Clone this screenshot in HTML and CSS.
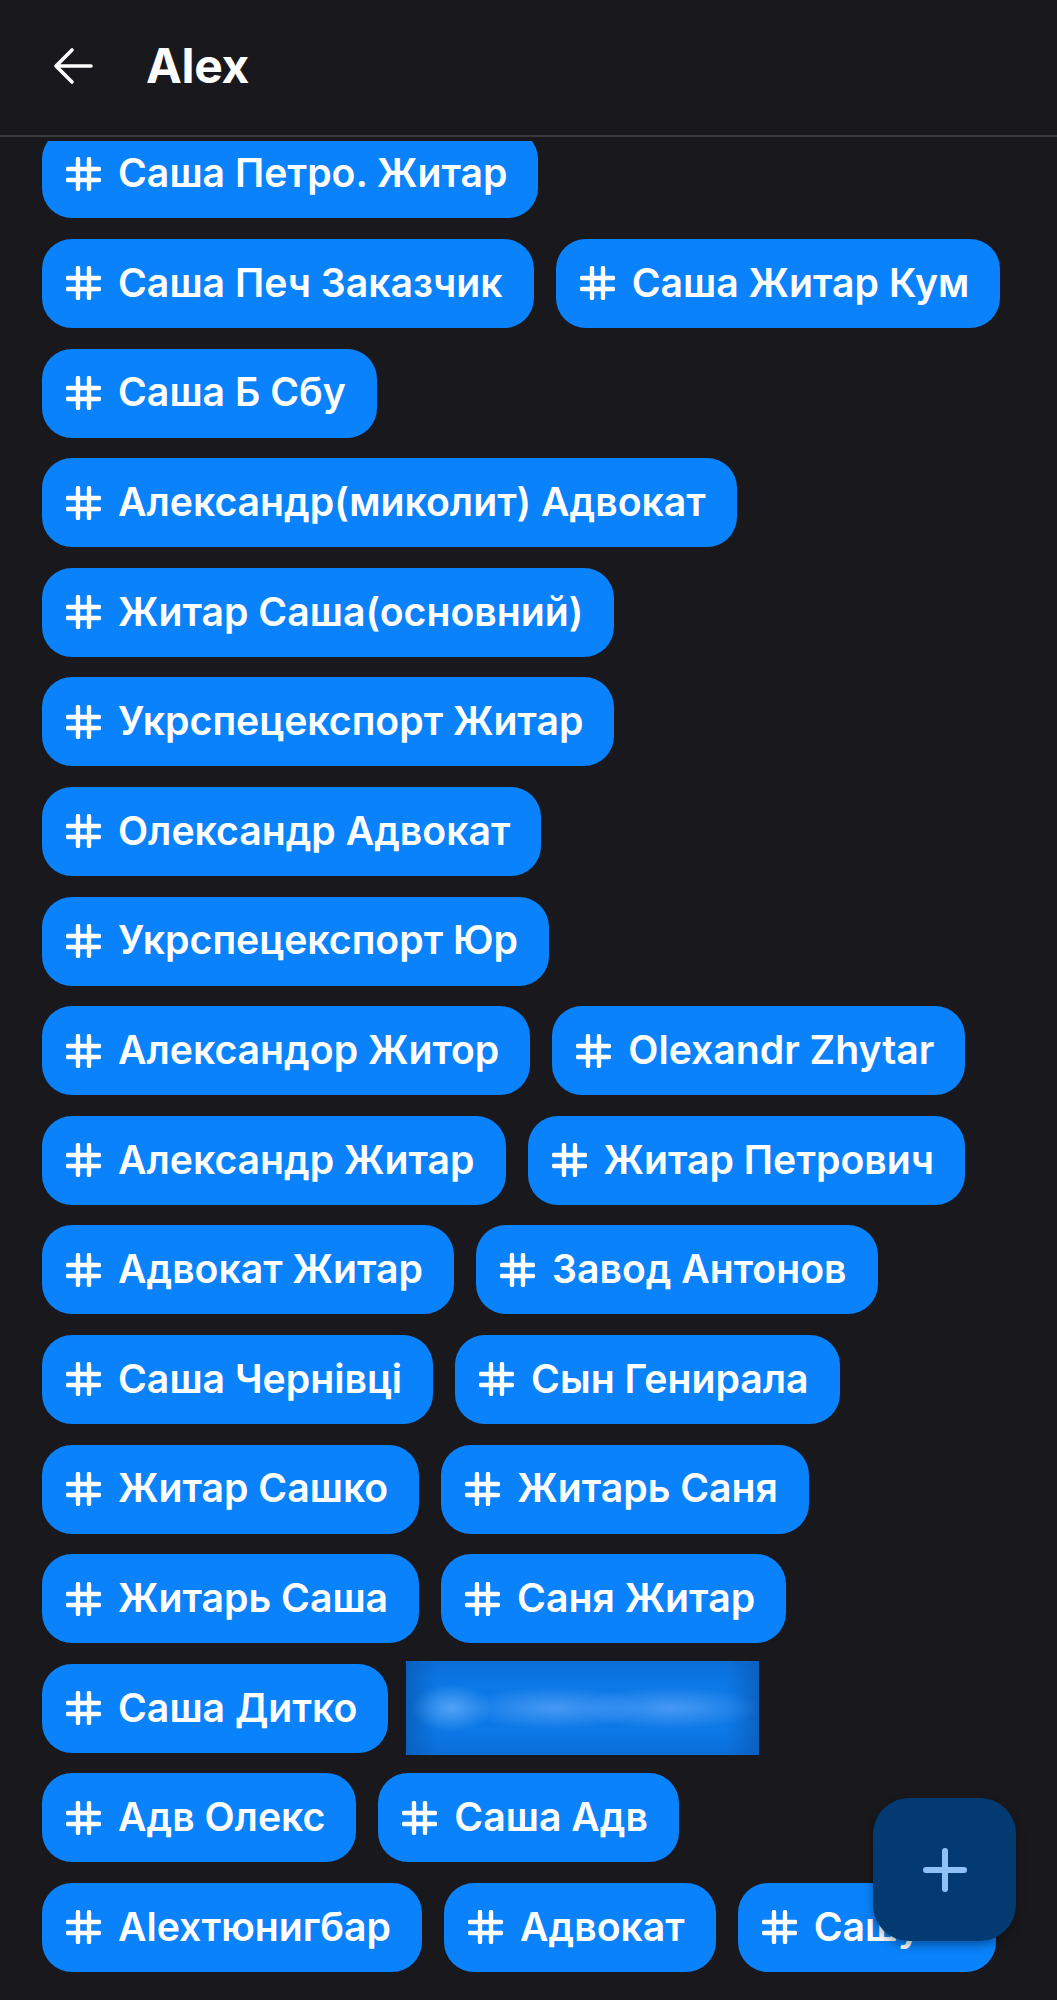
FILE: index.html
```html
<!DOCTYPE html>
<html>
<head>
    <title>Alex</title>
    <link rel="stylesheet" href="styles.css">
</head>
<body>
    <div class="topbar">
        <div class="bar">
            <svg class="back" viewBox="0 0 40 38" width="40" height="38">
                <path d="M38 19 H3 M19 3 L3 19 L19 35" fill="none" stroke="#fff" stroke-width="3.6" stroke-linecap="round" stroke-linejoin="round"/>
            </svg>
            <h1 class="title">Alex</h1>
        </div>
    </div>

    <div class="tags">
        <div class="tag"><svg class="hash" viewBox="0 0 35 34"><path d="M12 2 V32 M23 2 V32 M2 12 H33 M2 23 H33"/></svg><span>Саша Петро. Житар</span></div>
        <div class="tag"><svg class="hash" viewBox="0 0 35 34"><path d="M12 2 V32 M23 2 V32 M2 12 H33 M2 23 H33"/></svg><span>Саша Печ Заказчик</span></div>
        <div class="tag"><svg class="hash" viewBox="0 0 35 34"><path d="M12 2 V32 M23 2 V32 M2 12 H33 M2 23 H33"/></svg><span>Саша Житар Кум</span></div>
        <div class="tag"><svg class="hash" viewBox="0 0 35 34"><path d="M12 2 V32 M23 2 V32 M2 12 H33 M2 23 H33"/></svg><span>Саша Б Сбу</span></div>
        <div class="tag"><svg class="hash" viewBox="0 0 35 34"><path d="M12 2 V32 M23 2 V32 M2 12 H33 M2 23 H33"/></svg><span>Александр(миколит) Адвокат</span></div>
        <div class="tag"><svg class="hash" viewBox="0 0 35 34"><path d="M12 2 V32 M23 2 V32 M2 12 H33 M2 23 H33"/></svg><span>Житар Саша(основний)</span></div>
        <div class="tag"><svg class="hash" viewBox="0 0 35 34"><path d="M12 2 V32 M23 2 V32 M2 12 H33 M2 23 H33"/></svg><span>Укрспецекспорт Житар</span></div>
        <div class="tag"><svg class="hash" viewBox="0 0 35 34"><path d="M12 2 V32 M23 2 V32 M2 12 H33 M2 23 H33"/></svg><span>Олександр Адвокат</span></div>
        <div class="tag"><svg class="hash" viewBox="0 0 35 34"><path d="M12 2 V32 M23 2 V32 M2 12 H33 M2 23 H33"/></svg><span>Укрспецекспорт Юр</span></div>
        <div class="tag"><svg class="hash" viewBox="0 0 35 34"><path d="M12 2 V32 M23 2 V32 M2 12 H33 M2 23 H33"/></svg><span>Александор Житор</span></div>
        <div class="tag"><svg class="hash" viewBox="0 0 35 34"><path d="M12 2 V32 M23 2 V32 M2 12 H33 M2 23 H33"/></svg><span>Olexandr Zhytar</span></div>
        <div class="tag"><svg class="hash" viewBox="0 0 35 34"><path d="M12 2 V32 M23 2 V32 M2 12 H33 M2 23 H33"/></svg><span>Александр Житар</span></div>
        <div class="tag"><svg class="hash" viewBox="0 0 35 34"><path d="M12 2 V32 M23 2 V32 M2 12 H33 M2 23 H33"/></svg><span>Житар Петрович</span></div>
        <div class="tag"><svg class="hash" viewBox="0 0 35 34"><path d="M12 2 V32 M23 2 V32 M2 12 H33 M2 23 H33"/></svg><span>Адвокат Житар</span></div>
        <div class="tag"><svg class="hash" viewBox="0 0 35 34"><path d="M12 2 V32 M23 2 V32 M2 12 H33 M2 23 H33"/></svg><span>Завод Антонов</span></div>
        <div class="tag"><svg class="hash" viewBox="0 0 35 34"><path d="M12 2 V32 M23 2 V32 M2 12 H33 M2 23 H33"/></svg><span>Саша Чернівці</span></div>
        <div class="tag"><svg class="hash" viewBox="0 0 35 34"><path d="M12 2 V32 M23 2 V32 M2 12 H33 M2 23 H33"/></svg><span>Сын Генирала</span></div>
        <div class="tag"><svg class="hash" viewBox="0 0 35 34"><path d="M12 2 V32 M23 2 V32 M2 12 H33 M2 23 H33"/></svg><span>Житар Сашко</span></div>
        <div class="tag"><svg class="hash" viewBox="0 0 35 34"><path d="M12 2 V32 M23 2 V32 M2 12 H33 M2 23 H33"/></svg><span>Житарь Саня</span></div>
        <div class="tag"><svg class="hash" viewBox="0 0 35 34"><path d="M12 2 V32 M23 2 V32 M2 12 H33 M2 23 H33"/></svg><span>Житарь Саша</span></div>
        <div class="tag"><svg class="hash" viewBox="0 0 35 34"><path d="M12 2 V32 M23 2 V32 M2 12 H33 M2 23 H33"/></svg><span>Саня Житар</span></div>
        <div class="tag"><svg class="hash" viewBox="0 0 35 34"><path d="M12 2 V32 M23 2 V32 M2 12 H33 M2 23 H33"/></svg><span>Саша Дитко</span></div>
        <!-- hidden tag, blurred in the original -->
        <div class="redacted"></div>
        <div class="tag"><svg class="hash" viewBox="0 0 35 34"><path d="M12 2 V32 M23 2 V32 M2 12 H33 M2 23 H33"/></svg><span>Адв Олекс</span></div>
        <div class="tag"><svg class="hash" viewBox="0 0 35 34"><path d="M12 2 V32 M23 2 V32 M2 12 H33 M2 23 H33"/></svg><span>Саша Адв</span></div>
        <div class="tag"><svg class="hash" viewBox="0 0 35 34"><path d="M12 2 V32 M23 2 V32 M2 12 H33 M2 23 H33"/></svg><span>Alexтюнигбар</span></div>
        <div class="tag"><svg class="hash" viewBox="0 0 35 34"><path d="M12 2 V32 M23 2 V32 M2 12 H33 M2 23 H33"/></svg><span>Адвокат</span></div>
        <div class="tag tag-cut"><svg class="hash" viewBox="0 0 35 34"><path d="M12 2 V32 M23 2 V32 M2 12 H33 M2 23 H33"/></svg><span>Сашу…</span></div>
    </div>

    <button class="fab">
        <svg viewBox="0 0 44 44" width="44" height="44">
            <path d="M22 3 V41 M3 22 H41" fill="none" stroke="#8fc1f7" stroke-width="6" stroke-linecap="round"/>
        </svg>
    </button>
</body>
</html>
```

FILE: styles.css
```css
/* Reset */
* {
    margin: 0;
    padding: 0;
    box-sizing: border-box;
    font-family: 'Inter', 'Noto Sans', sans-serif;
}

html, body {
    width: 100%;
    background-color: #19191d;
    color: #ffffff;
}

body {
    overflow: hidden;
}

/* Header stays on top of the scrolled list */
.topbar {
    position: fixed;
    top: 0;
    left: 0;
    right: 0;
    z-index: 10;
    padding-bottom: 4px;
    background-color: #19191d;
}

.bar {
    height: 137px;
    display: flex;
    align-items: center;
    padding-left: 53px;
    padding-bottom: 4px;
    border-bottom: 2px solid #3a3a3d;
}

.back {
    display: block;
}

.title {
    margin-left: 53px;
    font-size: 48px;
    font-weight: 700;
    letter-spacing: -0.3px;
    line-height: 1;
}

/* Tag cloud */
.tags {
    display: flex;
    flex-wrap: wrap;
    align-items: center;
    gap: 20.6px 22px;
    padding: 129.4px 42px 40px 42px;
}

.tag {
    height: 89px;
    display: inline-flex;
    align-items: center;
    gap: 17px;
    padding: 0 31px 0 24px;
    background-color: #0a82fb;
    border-radius: 30px;
    font-size: 39.2px;
    font-weight: 600;
    white-space: nowrap;
}

.tag span {
    line-height: 1;
    padding-bottom: 2px;
}

.tag-cut {
    min-width: 258px;
}

.hash {
    flex: none;
    width: 35px;
    height: 34px;
    fill: none;
    stroke: #ffffff;
    stroke-width: 4.4;
    stroke-linecap: round;
}

.redacted {
    width: 353px;
    height: 94px;
    margin: -2.5px 0 -2.5px -4px;
    background:
        radial-gradient(ellipse 40px 24px at 13% 50%, rgba(130, 190, 255, 0.6), rgba(130, 190, 255, 0)),
        radial-gradient(ellipse 90px 22px at 42% 50%, rgba(120, 180, 255, 0.55), rgba(120, 180, 255, 0)),
        radial-gradient(ellipse 90px 22px at 75% 50%, rgba(120, 180, 255, 0.55), rgba(120, 180, 255, 0)),
        linear-gradient(to bottom, rgba(10, 90, 190, 0.35) 0%, rgba(10, 90, 190, 0) 25%, rgba(10, 90, 190, 0) 75%, rgba(10, 90, 190, 0.35) 100%),
        linear-gradient(to right, #0a62c2 0%, #0b78e6 9%, #0b78e6 91%, #0a62c2 100%);
}

.fab {
    position: fixed;
    left: 873px;
    top: 1798px;
    width: 143px;
    height: 143px;
    border: none;
    border-radius: 36px;
    background-color: #033a72;
    display: flex;
    align-items: center;
    justify-content: center;
    box-shadow: 0 4px 10px rgba(0, 0, 0, 0.35);
    z-index: 5;
}
```
